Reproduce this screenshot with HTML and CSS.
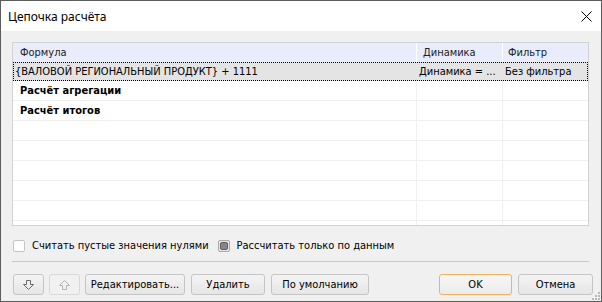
FILE: index.html
```html
<!DOCTYPE html>
<html lang="ru">
<head>
    <meta charset="UTF-8">
    <title>Цепочка расчёта</title>
    <link rel="stylesheet" href="styles.css">
</head>
<body>
    <div class="window">
        <div class="titlebar">
            <span class="title">Цепочка расчёта</span>
            <span class="close">
                <svg width="11" height="11" viewBox="0 0 11 11"><path d="M0.5 0.5 L10.5 10.5 M10.5 0.5 L0.5 10.5" stroke="#000" stroke-width="1" fill="none"/></svg>
            </span>
        </div>
        <div class="content">
            <div class="grid">
                <div class="row head">
                    <div class="cell c1">Формула</div>
                    <div class="cell c2">Динамика</div>
                    <div class="cell c3">Фильтр</div>
                </div>
                <div class="row sel">
                    <div class="cell c1 plain">{ВАЛОВОЙ РЕГИОНАЛЬНЫЙ ПРОДУКТ} + 1111</div>
                    <div class="cell c2 plain">Динамика = ...</div>
                    <div class="cell c3 plain">Без фильтра</div>
                </div>
                <div class="row">
                    <div class="cell c1 bold">Расчёт агрегации</div>
                    <div class="cell c2"></div>
                    <div class="cell c3"></div>
                </div>
                <div class="row">
                    <div class="cell c1 bold">Расчёт итогов</div>
                    <div class="cell c2"></div>
                    <div class="cell c3"></div>
                </div>
                <div class="row"><div class="cell c1"></div><div class="cell c2"></div><div class="cell c3"></div></div>
                <div class="row"><div class="cell c1"></div><div class="cell c2"></div><div class="cell c3"></div></div>
                <div class="row"><div class="cell c1"></div><div class="cell c2"></div><div class="cell c3"></div></div>
                <div class="row"><div class="cell c1"></div><div class="cell c2"></div><div class="cell c3"></div></div>
                <div class="row"><div class="cell c1"></div><div class="cell c2"></div><div class="cell c3"></div></div>
                <div class="row"><div class="cell c1"></div><div class="cell c2"></div><div class="cell c3"></div></div>
            </div>

            <div class="options">
                <label class="check">
                    <span class="box"></span>
                    <span>Считать пустые значения нулями</span>
                </label>
                <label class="check">
                    <span class="box partial"><span class="mark"></span></span>
                    <span>Рассчитать только по данным</span>
                </label>
            </div>

            <div class="sep"></div>

            <div class="buttons">
                <div class="group">
                    <button class="btn icon">
                        <svg width="11" height="10" viewBox="0 0 11 10"><path d="M3.5 0.5 H7.5 V4.5 H10.5 L5.5 9.5 L0.5 4.5 H3.5 Z" stroke="#6b6b6b" fill="none"/></svg>
                    </button>
                    <button class="btn icon disabled">
                        <svg width="11" height="10" viewBox="0 0 11 10"><path d="M3.5 9.5 H7.5 V5.5 H10.5 L5.5 0.5 L0.5 5.5 H3.5 Z" stroke="#b4b4b4" fill="none"/></svg>
                    </button>
                    <button class="btn edit">Редактировать...</button>
                    <button class="btn del">Удалить</button>
                    <button class="btn def">По умолчанию</button>
                </div>
                <div class="group">
                    <button class="btn ok">OK</button>
                    <button class="btn cancel">Отмена</button>
                </div>
            </div>
        </div>
        <div class="grip">
            <svg width="8" height="8" viewBox="0 0 8 8" fill="#b9b9b9">
                <rect x="6" y="0" width="2" height="2"/>
                <rect x="3" y="3" width="2" height="2"/>
                <rect x="6" y="3" width="2" height="2"/>
                <rect x="0" y="6" width="2" height="2"/>
                <rect x="3" y="6" width="2" height="2"/>
                <rect x="6" y="6" width="2" height="2"/>
            </svg>
        </div>
    </div>
</body>
</html>
```

FILE: styles.css
```css
body {
    margin: 0;
    padding: 0;
    font-family: "DejaVu Sans", sans-serif;
    font-stretch: condensed;
    font-size: 11px;
    color: #000;
}
.window {
    position: relative;
    width: 602px;
    height: 302px;
    box-sizing: border-box;
    border: 1px solid #5c5c5c;
    background-color: #f0f0f0;
    overflow: hidden;
}
.titlebar {
    height: 30px;
    background-color: #fff;
    display: flex;
    align-items: center;
    justify-content: space-between;
    padding: 0 9px 0 7px;
}
.title {
    font-family: "Noto Sans", sans-serif;
    font-stretch: normal;
    font-size: 12px;
}
.close {
    display: flex;
}
.content {
    padding: 11px 12px 0 11px;
}
.grid {
    height: 184px;
    box-sizing: border-box;
    border: 1px solid #d2d2d2;
    background-color: #fff;
    overflow: hidden;
}
.row {
    display: flex;
    height: 20px;
    box-sizing: border-box;
    border-bottom: 1px solid #f0f0f0;
}
.cell {
    box-sizing: border-box;
    display: flex;
    align-items: center;
    padding-left: 7px;
    white-space: nowrap;
    overflow: hidden;
}
.c1 {
    width: 404px;
    border-right: 1px solid #f0f0f0;
}
.c2 {
    width: 86px;
    border-right: 1px solid #f0f0f0;
}
.c3 {
    flex: 1;
}
.row.head {
    height: 19px;
    background-color: #e9ecfb;
    border-bottom: none;
    color: #222;
}
.row.head .c1, .row.head .c2 {
    border-right-color: #fff;
}
.row.head .c2 {
    padding-left: 6px;
}
.row.head .c3 {
    padding-left: 5px;
}
.row.sel {
    height: 19px;
    background-color: #e4e4e4;
    border-bottom: none;
    outline: 1px dotted #000;
    outline-offset: -1px;
}
.row.sel .cell {
    border-right: none;
}
.cell.plain {
    padding-left: 2px;
}
.row.sel .c2 {
    padding-left: 2px;
}
.cell.bold {
    font-weight: bold;
}
.options {
    display: flex;
    align-items: center;
    gap: 9px;
    margin-top: 13px;
    padding-left: 1px;
}
.check {
    display: flex;
    align-items: center;
    gap: 7px;
}
.box {
    width: 12px;
    height: 12px;
    box-sizing: border-box;
    border: 1px solid #c4c4c4;
    border-radius: 2px;
    background-color: #fff;
    display: flex;
    align-items: center;
    justify-content: center;
}
.box.partial {
    border-color: #a8a8a8;
    background-color: #e8e8e8;
}
.mark {
    width: 8px;
    height: 8px;
    box-sizing: border-box;
    border: 1px solid #5e5e5e;
    border-radius: 2px;
    background-color: #868686;
}
.sep {
    height: 1px;
    background-color: #c8c8c8;
    margin-top: 9px;
    width: 577px;
}
.buttons {
    display: flex;
    justify-content: space-between;
    margin-top: 12px;
    width: 580px;
    padding-left: 1px;
}
.group {
    display: flex;
    gap: 5px;
}
.btn {
    height: 21px;
    box-sizing: border-box;
    border: 1px solid #c4c4c4;
    border-radius: 3px;
    background: linear-gradient(#f4f4f4, #e6e6e6);
    font-family: inherit;
    font-stretch: condensed;
    font-size: 11px;
    color: #000;
    padding: 0;
    display: flex;
    align-items: center;
    justify-content: center;
}
.btn.icon {
    width: 31px;
}
.btn.disabled {
    border-color: #d8d8d8;
    background: #f1f1f1;
}
.btn.edit {
    width: 100px;
}
.btn.del {
    width: 74px;
    margin-left: 1px;
}
.btn.def {
    width: 98px;
    margin-left: 1px;
}
.btn.ok {
    width: 73px;
    border-color: #f2b25c;
    background: linear-gradient(#f6f6f6, #ececec);
}
.btn.cancel {
    width: 75px;
    margin-left: 1px;
}
.grip {
    position: absolute;
    right: 1px;
    bottom: 1px;
    display: flex;
}
```
